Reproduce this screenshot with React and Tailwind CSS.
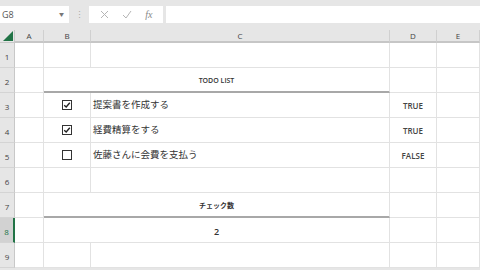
import React from 'react'

const cols = ['A', 'B', 'C', 'D', 'E']
const font = { fontFamily: '"Open Sans", "Noto Sans CJK JP", sans-serif' }

const todos = [
  { row: 3, label: '提案書を作成する', done: true },
  { row: 4, label: '経費精算をする', done: true },
  { row: 5, label: '佐藤さんに会費を支払う', done: false },
]

const Check = ({ on }) => (
  <div className="w-[10px] h-[10px] border border-[#333] bg-white flex items-center justify-center">
    {on && (
      <svg width="8" height="8" viewBox="0 0 8 8">
        <path d="M1.2 4.2 L3.2 6 L6.8 1.8" fill="none" stroke="#222" strokeWidth="1.4" />
      </svg>
    )}
  </div>
)

const RowHead = ({ n, active }) => (
  <div
    className={
      'flex items-end justify-center pb-[4px] text-[8px] border-b border-[#d4d4d4] ' +
      (active
        ? 'bg-[#d2d2d2] text-[#217346] border-r-2 border-r-[#217346]'
        : 'bg-[#e6e6e6] text-[#444] border-r border-r-[#c8c8c8]')
    }
  >
    {n}
  </div>
)

const Cell = ({ className = '', children }) => (
  <div className={'border-r border-b border-[#e2e2e2] bg-white ' + className}>{children}</div>
)

export default function App() {
  const rows = [1, 2, 3, 4, 5, 6, 7, 8, 9]
  return (
    <div className="w-[480px] h-[270px] overflow-hidden bg-[#e6e6e6] text-[#333]" style={font}>
      <div className="h-[30px] bg-[#e6e6e6] flex items-start pt-[6px] gap-0">
        <div className="w-[69px] h-[17px] bg-white flex items-center justify-between pl-[2px] pr-[5px] text-[9px] text-[#555]">
          <span>G8</span>
          <span className="text-[5px] text-[#777]">▼</span>
        </div>
        <div className="w-[20px] flex justify-center text-[#aaa] text-[9px] leading-[17px]">⋮</div>
        <div className="w-[74px] h-[17px] bg-white flex items-center justify-around px-[4px] text-[#bbb]">
          <svg width="9" height="9" viewBox="0 0 9 9">
            <path d="M1 1 L8 8 M8 1 L1 8" stroke="#b5b5b5" strokeWidth="1" />
          </svg>
          <svg width="10" height="9" viewBox="0 0 10 9">
            <path d="M1 5 L4 8 L9 1" fill="none" stroke="#b5b5b5" strokeWidth="1" />
          </svg>
          <span className="text-[10px] italic text-[#888]" style={{ fontFamily: '"Liberation Serif", serif' }}>
            fx
          </span>
        </div>
        <div className="ml-[3px] flex-1 h-[17px] bg-white" />
      </div>

      <div className="grid grid-cols-[15px_29px_47px_299px_47px_1fr] grid-rows-[13px_repeat(9,25px)]">
        <div className="bg-[#e6e6e6] border-b border-[#c8c8c8] border-r border-r-[#c8c8c8] relative">
          <svg className="absolute right-[1px] bottom-[1px]" width="10" height="10" viewBox="0 0 10 10">
            <path d="M10 0 L10 10 L0 10 Z" fill="#217346" />
          </svg>
        </div>
        {cols.map((c) => (
          <div
            key={c}
            className="bg-[#e6e6e6] border-b-2 border-b-[#c6c6c6] border-r border-r-[#d0d0d0] flex items-center justify-center text-[8px] text-[#444]"
          >
            {c}
          </div>
        ))}

        {rows.map((r) => {
          const t = todos.find((x) => x.row === r)
          return (
            <React.Fragment key={r}>
              <RowHead n={r} active={r === 8} />
              <Cell />
              {r === 2 || r === 7 || r === 8 ? (
                <div
                  className={
                    'col-span-2 bg-white flex items-center justify-center pt-[3px] ' +
                    (r === 2 || r === 7 ? 'border-b-2 border-b-[#a8a8a8] ' : 'border-b border-[#e2e2e2] ') +
                    'border-r border-r-[#e2e2e2] ' +
                    (r === 8 ? 'text-[9px] font-semibold' : 'text-[7px] font-semibold')
                  }
                >
                  {r === 2 && 'TODO LIST'}
                  {r === 7 && 'チェック数'}
                  {r === 8 && '2'}
                </div>
              ) : (
                <>
                  <Cell className="flex items-center justify-center">{t && <Check on={t.done} />}</Cell>
                  <Cell className="flex items-center pl-[2px] pt-[1px] text-[9.5px]">{t?.label}</Cell>
                </>
              )}
              <Cell className="flex items-center justify-center pt-[2px] text-[8px] font-semibold text-[#444]">
                {t && (t.done ? 'TRUE' : 'FALSE')}
              </Cell>
              <Cell />
            </React.Fragment>
          )
        })}
      </div>
    </div>
  )
}
